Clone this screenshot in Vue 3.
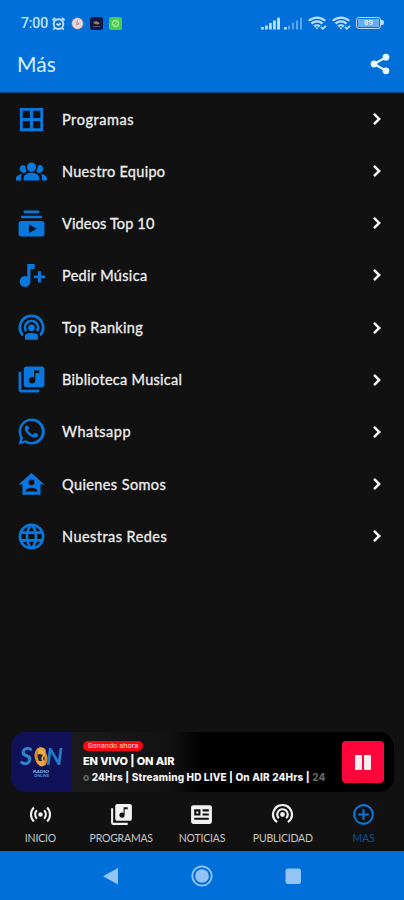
<script setup>
const icons = {
  grid: 'M3 3h18v18H3zM5.2 5.2v5.6h5.6V5.2zm8 0v5.6h5.6V5.2zm-8 8v5.6h5.6v-5.6zm8 0v5.6h5.6v-5.6z',
  group: 'M12 5a3.600 3.600 0 1 1 0 7.200A3.600 3.600 0 0 1 12 5zM5.2 7c.8 0 1.400.2 2 .6-.2 1.600.3 3.100 1.200 4.300A3.100 3.100 0 1 1 5.200 7zM18.800 7a3.100 3.100 0 1 1-3.200 4.900c.9-1.200 1.400-2.700 1.200-4.300.6-.4 1.200-.6 2-.6zM6 19v-2c0-2.300 2.700-4 6-4s6 1.700 6 4v2zM0 19v-1.700c0-1.700 2.200-3 4.800-3.300-.6.700-1 1.700-1 2.800V19zM24 19h-3.800v-2.200c0-1.100-.4-2.100-1-2.800 2.600.3 4.800 1.600 4.800 3.300z',
  videos: 'M20 8H4V6h16zm-2-6H6v2h12zm4 10v8a2 2 0 0 1-2 2H4a2 2 0 0 1-2-2v-8c0-1.100.9-2 2-2h16a2 2 0 0 1 2 2zm-6 4-6-3.270v6.530z',
  library: 'M20 2H8c-1.100 0-2 .9-2 2v12c0 1.100.9 2 2 2h12c1.100 0 2-.9 2-2V4c0-1.100-.9-2-2-2zm-2 5h-3v5.500a2.500 2.500 0 1 1-2.500-2.500c.57 0 1.080.19 1.500.51V5h4zM4 6H2v14c0 1.100.9 2 2 2h14v-2H4z',
  musicAdd: 'M8.700 3h5.700v4h-3.200v9.700a4.200 4.200 0 1 1-2.500-3.900zM17 8.700h2.300V12h3.200v2.200h-3.200v3.200H17v-3.200h-3.200V12H17z',
  house: 'M12 3 2 12h3v8h14v-8h3zm0 5a2.250 2.250 0 1 1 0 4.500A2.250 2.250 0 0 1 12 8zm4.500 9.500h-9v-.7c0-1.500 3-2.300 4.500-2.300s4.500.8 4.500 2.300z',
  whatsapp: 'M12 2a10 10 0 0 0-8.600 15L2 22l5.200-1.400A10 10 0 1 0 12 2zm0 1.900a8.100 8.100 0 1 1-4.500 14.900l-2.800.7.800-2.700A8.100 8.100 0 0 1 12 3.900zM8.500 7.300c-.4 0-1.700.7-1.700 2.300 0 1.500 1.200 3.100 2.200 4.200 1.500 1.600 3.500 3 5.600 3 1.500 0 2.600-1.100 2.600-2.200 0-.4-.1-.5-.4-.6l-1.900-.9c-.3-.1-.5-.1-.7.2l-.8.9c-.2.200-.4.200-.7.100-1.200-.5-2.700-1.900-3.300-3.100-.1-.3 0-.4.200-.6l.5-.7c.1-.2.100-.4 0-.6L9.300 7.700c-.2-.4-.4-.4-.8-.4z',
  globe: 'M12 2a10 10 0 1 0 0 20 10 10 0 0 0 0-20zm6.900 6h-2.950a15.700 15.700 0 0 0-1.400-3.600A8 8 0 0 1 18.900 8zM12 4c.83 1.200 1.500 2.500 1.900 4h-3.800c.4-1.500 1.070-2.800 1.900-4zM4.300 14a8 8 0 0 1 0-4h3.400a16.500 16.500 0 0 0 0 4zm.8 2h2.950c.3 1.250.8 2.450 1.400 3.600A8 8 0 0 1 5.100 16zm2.950-8H5.100a8 8 0 0 1 4.350-3.600A15.700 15.700 0 0 0 8.050 8zM12 20c-.83-1.200-1.500-2.500-1.900-4h3.800A13.500 13.500 0 0 1 12 20zm2.300-6H9.700a14 14 0 0 1 0-4h4.600a14 14 0 0 1 0 4zm.25 5.600c.6-1.150 1.100-2.350 1.400-3.600h2.950a8 8 0 0 1-4.350 3.600zm1.750-5.600a16.500 16.500 0 0 0 0-4h3.400a8 8 0 0 1 0 4z',
  podcast: 'M12 2a10 10 0 0 0-5.800 18.200l1.200-1.700a8 8 0 1 1 9.200 0l1.200 1.700A10 10 0 0 0 12 2zm0 4a6 6 0 0 0-4.200 10.300l1.400-1.500a4 4 0 1 1 5.600 0l1.400 1.500A6 6 0 0 0 12 6zm0 3.700a2.300 2.300 0 1 0 0 4.600 2.300 2.300 0 0 0 0-4.600z',
  ranking: 'M12 2A10 10 0 0 0 4.700 18.900l1.300-1.700a8 8 0 1 1 12 0l1.300 1.700A10 10 0 0 0 12 2zm0 4a6 6 0 0 0-4.900 9.500l1.500-1.500a4 4 0 1 1 6.800 0l1.500 1.500A6 6 0 0 0 12 6zm0 3.600a2.600 2.600 0 1 0 0 5.200 2.600 2.600 0 0 0 0-5.200zM7 21.500V18.300c0-1.300 1.700-2.100 5-2.100s5 .8 5 2.100v3.200z',
  live: 'M12 9.800a2.200 2.200 0 1 0 0 4.400 2.200 2.200 0 0 0 0-4.400zM7.800 7.300 9.200 8.700a4.700 4.700 0 0 0 0 6.600l-1.400 1.400a6.700 6.700 0 0 1 0-9.400zM16.200 7.300l-1.400 1.400a4.700 4.700 0 0 1 0 6.600l1.400 1.400a6.700 6.700 0 0 0 0-9.400zM4.900 4.600l1.400 1.400a8.600 8.600 0 0 0 0 12l-1.400 1.400a10.600 10.600 0 0 1 0-14.800zM19.100 4.600 17.700 6a8.600 8.600 0 0 1 0 12l1.400 1.400a10.600 10.600 0 0 0 0-14.800z',
  news: 'M4 3h16a2 2 0 0 1 2 2v14a2 2 0 0 1-2 2H4a2 2 0 0 1-2-2V5c0-1.100.9-2 2-2zm1 4v6h6V7zm8 0v2h6V7zm0 4v2h6v-2zm-8 4v2h14v-2zM7 9h2v2H7z',
  plus: 'M12 2a10 10 0 1 0 0 20 10 10 0 0 0 0-20zm0 2a8 8 0 1 1 0 16 8 8 0 0 1 0-16zm-1 3h2v4h4v2h-4v4h-2v-4H7v-2h4z',
}

const menu = [
  { label: 'Programas', icon: 'grid', spacing: 0.55 },
  { label: 'Nuestro Equipo', icon: 'group', spacing: 0.3 },
  { label: 'Videos Top 10', icon: 'videos', spacing: 0.15 },
  { label: 'Pedir Música', icon: 'musicAdd', spacing: 0.32 },
  { label: 'Top Ranking', icon: 'ranking', spacing: 0.32 },
  { label: 'Biblioteca Musical', icon: 'library', spacing: 0.28 },
  { label: 'Whatsapp', icon: 'whatsapp', spacing: 0.5 },
  { label: 'Quienes Somos', icon: 'house', spacing: 0.4 },
  { label: 'Nuestras Redes', icon: 'globe', spacing: 0.45 },
]

const tabs = [
  { label: 'INICIO', icon: 'live' },
  { label: 'PROGRAMAS', icon: 'library' },
  { label: 'NOTICIAS', icon: 'news' },
  { label: 'PUBLICIDAD', icon: 'podcast' },
  { label: 'MAS', icon: 'plus', active: true },
]
</script>

<template>
  <div class="screen">
    <header class="top">
      <div class="status">
        <span class="time">7:00</span>
        <svg class="alarm" viewBox="0 0 16 16" fill="none" stroke="#c5e2fa" stroke-width="2">
          <circle cx="8" cy="8.600" r="5.200" /><path d="M1.500 4.500 4.500 2M14.500 4.500 11.500 2M5.800 8.200 8 9.600l2.500-1.800M4 13l-1.500 1.600M12 13l1.500 1.600" />
        </svg>
        <svg class="app" viewBox="0 0 13 13"><circle cx="6.500" cy="6.500" r="6" fill="#dcd9df" stroke="#596a91" /><path d="m5.500 8 1-4.500M6 8l2-2" stroke="#d28c7c" stroke-width="1.200" /></svg>
        <svg class="app" viewBox="0 0 13 13"><rect width="13" height="13" rx="3" fill="#111746" /><path d="M3 5.500 6 4l4 2-2 1.500-3-.5" fill="#a98242" /><path d="M3 9.500h7" stroke="#455a93" /></svg>
        <svg class="app" viewBox="0 0 13 13"><rect width="13" height="13" rx="2" fill="#42cf4e" /><circle cx="6.500" cy="6.500" r="3" fill="none" stroke="#9eea92" stroke-width="1.300" /><path d="m5 8 3-3" stroke="#9eea92" /></svg>
        <div class="signals">
          <svg class="bars" viewBox="0 0 19 13" fill="#b9dcfa"><path d="M0 10h2.800v2.500H0zM4 8.500h2.800v4H4zM8 6h2.800v6.500H8zM12 3.500h2.800v9H12zM16 .8h3v11.700h-3z" /></svg>
          <svg class="bars" viewBox="0 0 19 13" fill="#5ba6ec"><path fill="#b9dcfa" d="M0 10h2.800v2.500H0z" /><path d="M4 8.500h2v4H4zM8 6h2v6.500H8zM12 3.500h2v9h-2zM16 .8h2v11.700h-2z" /></svg>
          <svg v-for="n in 2" :key="n" class="wifi" viewBox="0 0 19 14" fill="none" stroke="#b9dcfa" stroke-width="2.200"><path d="M.8 4.800a12 12 0 0 1 16.400 0M3.500 7.600a8 8 0 0 1 11 0M6.200 10.400a4 4 0 0 1 5.600 0" /><path fill="#b9dcfa" stroke="none" d="m7.200 11.600 1.800 2 1.800-2z" /><path d="m13 11 1.800 1.800L18 9.800" stroke-width="1.800" /></svg>
          <div class="battery"><span>89</span></div>
        </div>
      </div>
      <div class="appbar">
        <h1>Más</h1>
        <svg class="share" viewBox="0 0 24 24" fill="#e9f7ff"><path d="m5.500 12 13-7.300M5.500 12l13 7.300" stroke="#e9f7ff" stroke-width="2.200" /><circle cx="5.500" cy="12" r="3.700" /><circle cx="18.500" cy="4.600" r="3.700" /><circle cx="18.500" cy="19.400" r="3.700" /></svg>
      </div>
    </header>

    <main class="menu">
      <div v-for="item in menu" :key="item.label" class="row">
        <svg class="row-icon" viewBox="0 0 24 24"><path :d="icons[item.icon]" fill-rule="evenodd" /></svg>
        <span class="label" :style="{ letterSpacing: item.spacing + 'px' }">{{ item.label }}</span>
        <svg class="chevron" viewBox="0 0 10 14"><path d="m2 1.800 5.200 5.200L2 12.200" /></svg>
      </div>
    </main>

    <section class="player">
      <div class="cover">
        <svg viewBox="0 0 61 60">
          <text x="9" y="33" font-family="Lato" font-style="italic" font-weight="700" font-size="24" fill="#2f86cf">S</text>
          <text x="35" y="33" font-family="Lato" font-style="italic" font-weight="700" font-size="23" fill="#237bc7" textLength="17" lengthAdjust="spacingAndGlyphs">N</text>
          <ellipse cx="30" cy="25" rx="4.800" ry="8" fill="#26232e" stroke="#d58d2d" stroke-width="3" transform="rotate(-12 30 25)" />
          <path d="M26 17c3-3 7-2 9 1l-2 5-5-1zM25 29l4 5 6-1-3-4z" fill="#e9a43e" />
          <path d="m27 22 3-3 3 3-2 5 2 3" fill="none" stroke="#f0b95c" stroke-width="1.500" />
          <text x="22" y="41" font-family="Lato" font-weight="900" font-style="italic" font-size="4.500" fill="#74b6ed" textLength="16" lengthAdjust="spacingAndGlyphs">RADIO</text>
          <text x="23" y="45" font-family="Lato" font-weight="900" font-style="italic" font-size="4.500" fill="#4c93d6" textLength="15" lengthAdjust="spacingAndGlyphs">ONLINE</text>
        </svg>
      </div>
      <div class="info">
        <span class="badge">Sonando ahora</span>
        <strong class="title">EN VIVO | ON AIR</strong>
        <div class="ticker"><span class="dim">o</span> 24Hrs | Streaming HD LIVE | On AIR 24Hrs | <span class="dim">24</span></div>
      </div>
      <button class="pause"><i></i><i></i></button>
    </section>

    <nav class="tabs">
      <div v-for="tab in tabs" :key="tab.label" class="tab" :class="{ active: tab.active }">
        <svg viewBox="0 0 24 24"><path :d="icons[tab.icon]" fill-rule="evenodd" /></svg>
        <span>{{ tab.label }}</span>
      </div>
    </nav>

    <footer class="system">
      <svg viewBox="0 0 24 24"><path d="M19 4v16.500L4 12.300z" /></svg>
      <svg viewBox="0 0 24 24"><circle cx="12" cy="12" r="9.700" fill="none" stroke="#94c3f5" stroke-width="1.800" /><circle cx="12" cy="12" r="6.800" /></svg>
      <svg viewBox="0 0 24 24"><rect x="4.500" y="4.500" width="15.500" height="15.500" rx="2.500" /></svg>
    </footer>
  </div>
</template>

<style>
body { background: #111; }
</style>

<style scoped>
* { box-sizing: border-box; }
.screen { width: 404px; height: 900px; display: flex; flex-direction: column; background: #111; color: #efefef; font-family: Lato, sans-serif; overflow: hidden; }
.top { height: 93px; flex: none; background: #006fd9; border-bottom: 1px solid #064984; }
.status { height: 40px; display: flex; align-items: center; padding: 6px 22px 0 21px; }
.time { font: 400 14px Roboto, sans-serif; color: #d7efff; width: 28px; -webkit-text-stroke: .2px #d7efff; }
.alarm { width: 15px; height: 15px; margin-left: 2px; }
.app { width: 13px; height: 13px; margin-left: 6px; }
.alarm + .app { margin-left: 5px; }
.signals { display: flex; align-items: center; margin-left: auto; }
.bars { width: 19px; height: 13px; margin-right: 4px; }
.wifi { width: 19px; height: 14px; margin: 0 0 0 5px; }
.bars + .wifi { margin-left: 1px; }
.battery { position: relative; width: 25px; height: 12px; border: 1.500px solid #b9dcfa; border-radius: 3px; margin: 0 1px 0 5px; display: flex; padding: 1px; }
.battery::after { content: ''; position: absolute; right: -4px; top: 2px; width: 3px; height: 5px; background: #b9dcfa; border-radius: 0 2px 2px 0; }
.battery span { flex: 1; background: #67adf0; color: #d7efff; font: 700 8px/8px Roboto, sans-serif; text-align: center; }
.appbar { display: flex; align-items: center; justify-content: space-between; height: 49px; padding: 0 13px 0 17px; }
h1 { margin: 0 0 2px; font-size: 21px; line-height: 24px; font-weight: 400; color: #d9efff; letter-spacing: .1px; }
.share { width: 22px; height: 22px; margin-bottom: 1px; }
.menu { flex: 1; display: flex; flex-direction: column; }
.row { height: 52.150px; display: flex; align-items: center; padding: 0 22px 0 16px; }
.row-icon { width: 31px; height: 31px; fill: #0878df; margin-right: 15px; }
.label { flex: 1; font-size: 14.500px; line-height: 20px; padding-top: 1px; -webkit-text-stroke: .3px #efefef; }
.chevron { width: 10px; height: 14px; fill: none; stroke: #f5f5f5; stroke-width: 2.500; }
.player { height: 60px; flex: none; margin: 0 10px 0 11px; display: flex; align-items: center; border-radius: 15px; overflow: hidden; background: linear-gradient(90deg, #1a1a1a 22%, #111 42%, #000 50%); }
.cover { width: 61px; height: 60px; background: #11115a; }
.cover svg { display: block; width: 61px; height: 60px; }
.info { width: 243px; height: 60px; margin-left: 11px; display: flex; flex-direction: column; align-items: flex-start; font-family: Inter, sans-serif; }
.badge { margin-top: 9px; width: 60px; height: 10px; border-radius: 5px; background: #fa0710; color: #ffdcdc; font: 7.500px/10px Roboto, sans-serif; text-align: center; }
.title { font-size: 11px; line-height: 14px; font-weight: 800; margin-top: 3px; letter-spacing: -.1px; color: #fff; white-space: nowrap; }
.ticker { font-size: 10px; line-height: 14px; font-weight: 800; margin-top: 2px; letter-spacing: .15px; color: #f5f5f5; white-space: nowrap; }
.dim { color: #666; }
.pause { width: 42px; height: 42px; padding: 0; margin-left: 16px; border: 0; border-radius: 4px; background: #fe063c; display: flex; align-items: center; justify-content: center; gap: 1.500px; }
.pause i { width: 7px; height: 15px; background: #ffeef1; border-radius: 1px; }
.tabs { height: 59px; flex: none; display: flex; }
.tab { width: 81px; display: flex; flex-direction: column; align-items: center; padding-top: 10px; fill: #f2f2f2; color: #c8c8c8; }
.tab svg { width: 25px; height: 25px; }
.tab span { font-size: 10.500px; line-height: 14px; margin-top: 4px; letter-spacing: -.2px; }
.tab.active { fill: #0878df; color: #07539a; }
.system { height: 49px; flex: none; display: flex; justify-content: center; align-items: center; gap: 67px; background: #006fd9; fill: #94c3f5; }
.system svg { width: 24px; height: 24px; }
</style>
